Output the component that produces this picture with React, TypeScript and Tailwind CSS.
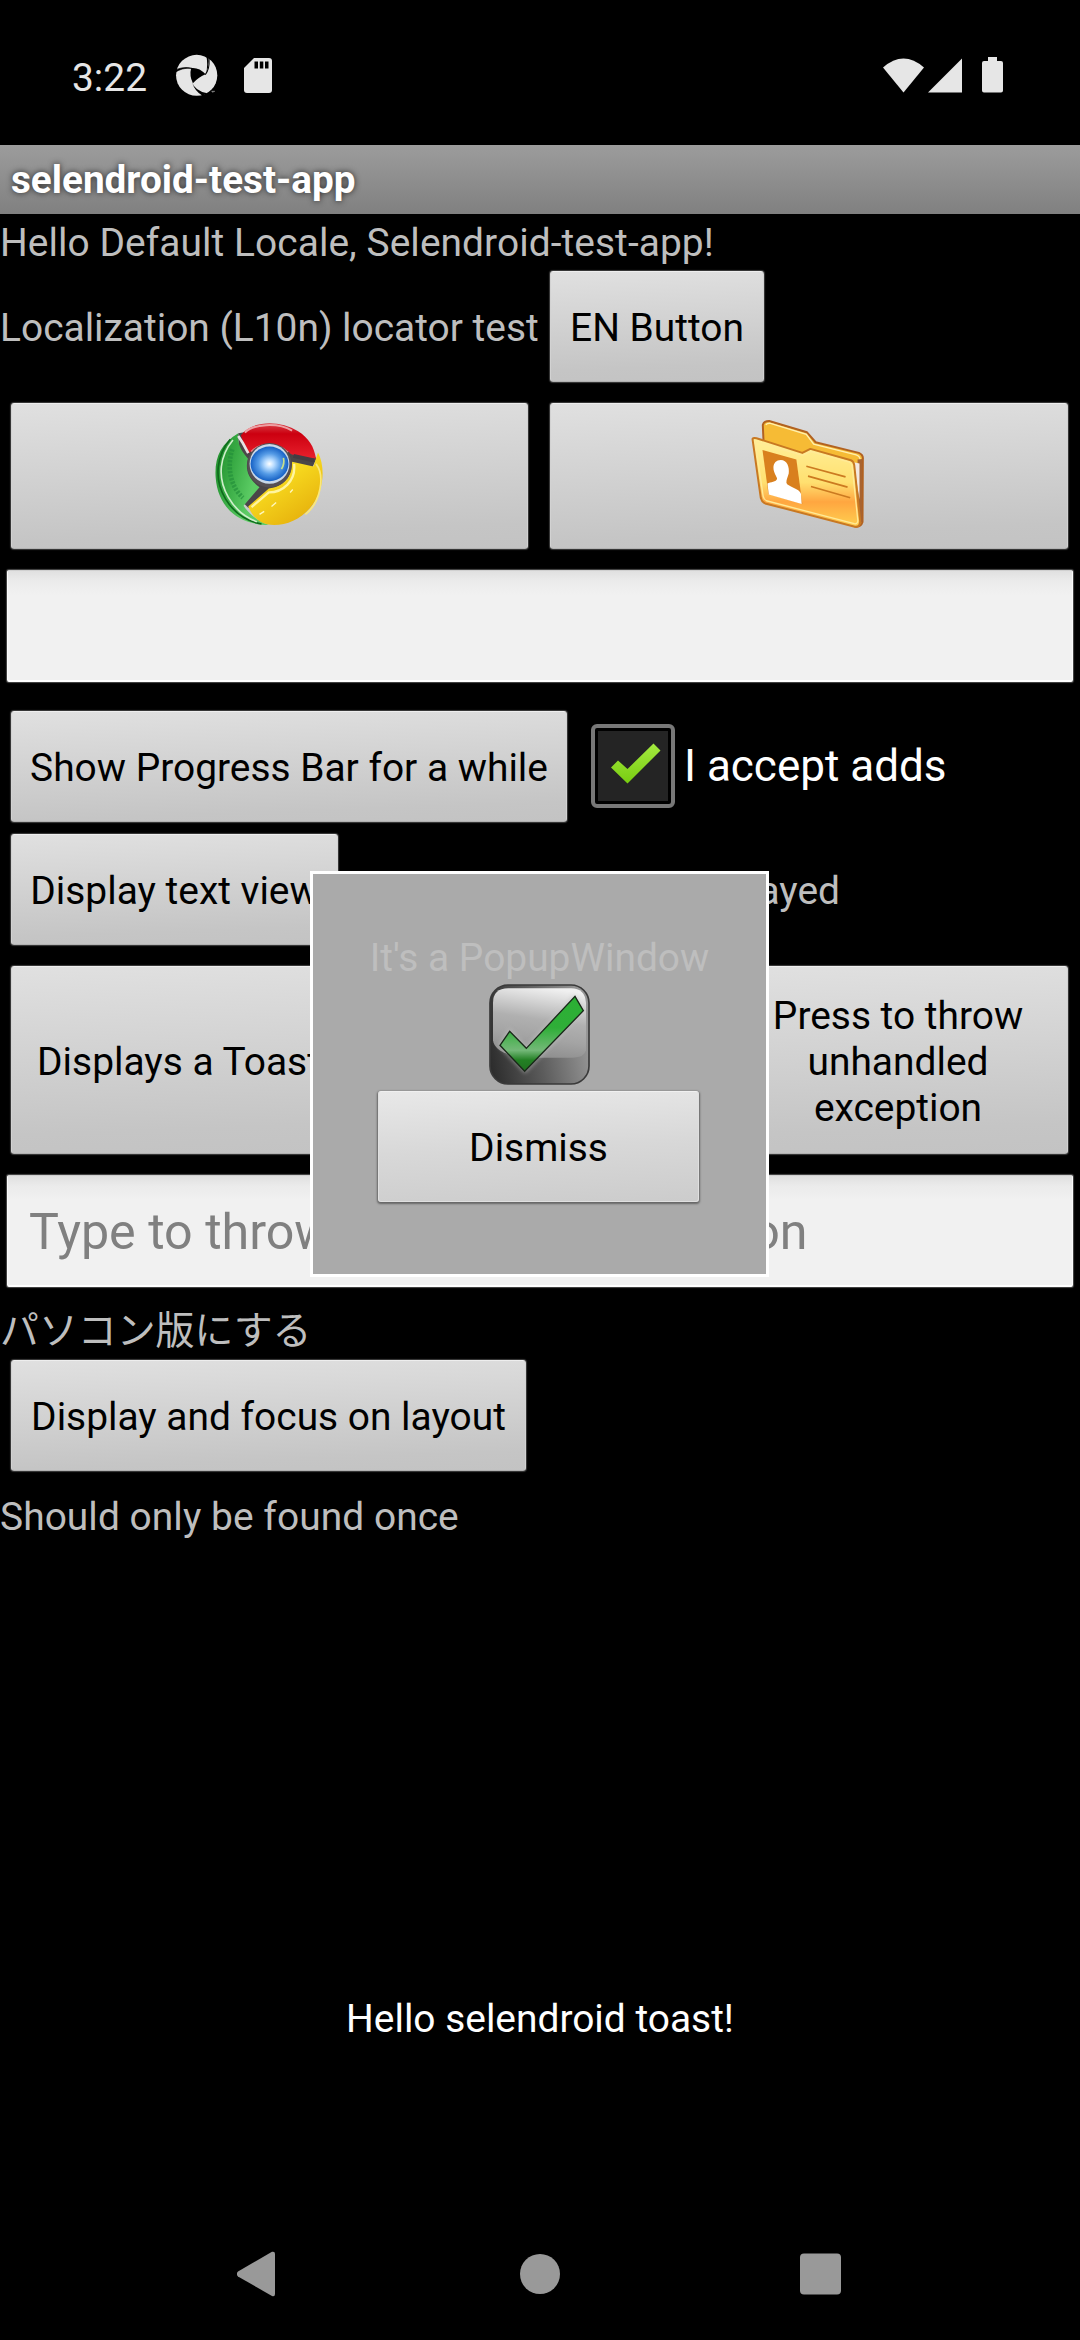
import React from "react";

const face =
  "rounded-[3px] border border-[#d2d2d2] border-t-[#eeeeee] border-b-[#b2b2b2] bg-[linear-gradient(178deg,#e0e0e0_0%,#d1d1d1_48%,#c5c5c5_85%,#c3c3c3_100%)] shadow-[0_0_1px_1px_#3c3c3c]";

function Button({ className = "", children }: { className?: string; children?: React.ReactNode }) {
  return (
    <button className={`flex items-center justify-center pt-[3px] text-center leading-[46px] text-black ${face} ${className}`}>
      {children}
    </button>
  );
}

function Field({ placeholder = "" }: { placeholder?: string }) {
  return (
    <input
      placeholder={placeholder}
      className="ml-[7px] block h-[112px] w-[1066px] rounded-[2px] border border-[#fafafa] border-t-[#d0d0d0] border-b-2 border-b-white bg-[#f1f1f1] bg-[linear-gradient(#e0e0e0,#ebebeb_10px,#f1f1f1_24px)] px-[21px] pt-[2px] text-[50.2px] text-black shadow-[0_0_1px_1px_#4a4a4a] outline-none placeholder:text-[#808080] placeholder:opacity-100"
    />
  );
}

function RotorIcon() {
  return (
    <svg className="h-[43px] w-[43px]" viewBox="508 72 125 129" preserveAspectRatio="none">
      <ellipse cx="571" cy="136" rx="60" ry="61.5" fill="#e6e6e6" />
      <path d="M555 114 Q578 111 597 133 Q578 140 560 160 Q549 137 555 114Z" fill="#000" />
      <path d="M507 128 Q528 112 557 115 Q532 108 507 121Z" fill="#000" stroke="#000" strokeWidth="2" />
      <path d="M603 70 Q611 105 597 134 Q605 110 599 76Z" fill="#000" />
      <path d="M558 158 Q566 182 602 190 L588 197 Q566 184 558 158Z" fill="#000" />
      <path d="M607 88 Q609 118 596 134" fill="none" stroke="#000" strokeWidth="3" />
      <path d="M614 184h10M618 184v4" stroke="#bbb" strokeWidth="2" />
    </svg>
  );
}

function SdIcon() {
  return (
    <svg className="h-[35px] w-[28px]" viewBox="0 0 28 35">
      <path d="M10 0H25a3 3 0 0 1 3 3V32a3 3 0 0 1-3 3H3a3 3 0 0 1-3-3V10Z" fill="#e6e6e6" />
      <path d="M10.500 3.500h3.500v7h-3.500zM15.800 3.500h3.500v7h-3.500zM21 3.500h3.500v7H21z" fill="#000" />
    </svg>
  );
}

function ChromeIcon() {
  return (
    <svg className="h-[108px] w-[113px]" viewBox="100 95 340 325">
      <defs>
        <linearGradient id="cr" x1="0" y1="0" x2="0" y2="1">
          <stop offset="0" stopColor="#d84048" />
          <stop offset=".3" stopColor="#cc0010" />
          <stop offset="1" stopColor="#e8202c" />
        </linearGradient>
        <linearGradient id="cg" x1="0" y1="0" x2="1" y2=".4">
          <stop offset="0" stopColor="#1c8a28" />
          <stop offset=".4" stopColor="#38aa44" />
          <stop offset=".8" stopColor="#5ccc64" />
        </linearGradient>
        <linearGradient id="cy" x1="0" y1="0" x2=".7" y2="1">
          <stop offset="0" stopColor="#fff070" />
          <stop offset=".4" stopColor="#f8dc20" />
          <stop offset="1" stopColor="#e6b00c" />
        </linearGradient>
        <radialGradient id="cb">
          <stop offset="0" stopColor="#fff" />
          <stop offset=".25" stopColor="#b8dcff" />
          <stop offset=".6" stopColor="#559be6" />
          <stop offset="1" stopColor="#1560c4" />
        </radialGradient>
      </defs>
      <path d="M176 132 L300 110 L412 208 L400 232 L330 320 L206 356 L180 330Z" fill="#4a4648" />
      <path d="M176 132 C122 164 104 208 108 265 C114 350 172 408 268 408 C230 394 208 374 192 350 L240 294 C206 270 196 240 205 208 C190 190 172 170 176 132Z" fill="url(#cg)" />
      <path d="M152 150 C112 196 100 268 138 330 C166 376 208 398 246 405" fill="none" stroke="#0e6a1c" strokeWidth="5" />
      <path d="M160 152 C122 198 110 262 146 324 C170 366 204 388 232 398" fill="none" stroke="#cfeecb" strokeWidth="5" />
      <path d="M158 180 C142 230 150 290 190 326" fill="none" stroke="#24903a" strokeWidth="14" strokeDasharray="7 4" opacity=".7" />
      <path d="M184 138 C215 94 300 90 356 126 C388 146 404 172 410 208 C376 206 354 202 334 194 C300 156 240 158 208 192 C198 170 190 160 184 138Z" fill="url(#cr)" />
      <path d="M196 130 C220 104 294 98 338 124" fill="none" stroke="#eda0a4" strokeWidth="6" />
      <path d="M216 188 C240 162 294 160 325 190" fill="none" stroke="#f0868c" strokeWidth="7" />
      <path d="M176 140 L190 162 L206 192" fill="none" stroke="#e6e2e4" strokeWidth="8" />
      <path d="M338 218 L402 232 L416 190 C438 234 434 296 402 344 C366 396 310 414 262 406 C236 398 218 382 206 352 L268 298 C312 294 338 262 338 218Z" fill="url(#cy)" />
      <path d="M344 224 C350 276 310 310 268 310 L216 354" fill="none" stroke="#fff5a0" strokeWidth="7" />
      <path d="M410 224 C438 260 424 340 378 376" fill="none" stroke="#fbe878" strokeWidth="5" />
      <path d="M276 352 l14 -12 M332 310 l8 -9 M240 376 l14 -9" stroke="#fff8c0" strokeWidth="4" />
      <path d="M342 200 L404 214" stroke="#443c42" strokeWidth="12" />
      <circle cx="270" cy="228" r="67" fill="#555054" />
      <circle cx="270" cy="224" r="60" fill="#c9d9ea" />
      <ellipse cx="270" cy="224" rx="57" ry="52" fill="url(#cb)" />
      <path d="M306 240 Q316 224 312 206" fill="none" stroke="#c9e08a" strokeWidth="5" />
    </svg>
  );
}

function ContactsIcon() {
  return (
    <svg className="h-[113px] w-[120px]" viewBox="90 85 360 340">
      <defs>
        <linearGradient id="fb" x1="0" y1="0" x2="0" y2="1">
          <stop offset="0" stopColor="#fff09a" />
          <stop offset=".5" stopColor="#ffe070" />
          <stop offset=".72" stopColor="#ffa640" />
          <stop offset="1" stopColor="#ffd050" />
        </linearGradient>
      </defs>
      <path d="M131 106 Q134 94 150 94 L264 128 L290 158 L420 190 Q434 196 432 210 L431 398 Q426 414 410 412 L140 310Z" fill="#f6bb35" stroke="#b26220" strokeWidth="6" strokeLinejoin="round" />
      <path d="M140 106 Q144 100 154 101 L262 134 L284 164 L412 196 Q424 200 424 212" fill="none" stroke="#fff0b0" strokeWidth="4" />
      <path d="M416 210 L430 208 L430 396 L420 408Z" fill="#a8632f" />
      <path d="M404 218 L422 222 L422 330Z" fill="#f3e8e0" />
      <path d="M100 148 Q102 144 112 146 L250 190 L274 178 L396 212 Q404 215 406 226 L424 396 Q424 414 408 412 L138 342 Q128 338 125 326Z" fill="url(#fb)" stroke="#c87822" strokeWidth="6" strokeLinejoin="round" />
      <path d="M108 156 L250 197 L276 186 L392 218 Q399 222 400 232 L417 394 Q416 405 406 403 L142 334 Q134 330 132 320Z" fill="none" stroke="#ffea98" strokeWidth="4" />
      <path d="M130 181 L232 210 L250 344 L148 314Z" fill="#d9801e" />
      <path d="M185 211 C204 211 212 232 209 252 C206 264 202 268 202 280 C204 292 242 296 246 314 L248 344 L149 315 L145 282 C154 278 172 278 174 268 C172 258 163 250 163 234 C163 220 172 211 185 211Z" fill="#fff" />
      <path d="M262 230 L380 262 M267 260 L386 293 M276 291 L394 325" stroke="#cc7a20" strokeWidth="5" />
    </svg>
  );
}

function PopupIcon() {
  return (
    <svg className="h-[101px] w-[101px]" viewBox="88 71 303 303">
      <defs>
        <linearGradient id="pb" x1=".6" y1="0" x2=".4" y2="1">
          <stop offset="0" stopColor="#f0f0f0" />
          <stop offset=".45" stopColor="#b0b0b0" />
          <stop offset=".7" stopColor="#a4a4a4" />
          <stop offset="1" stopColor="#8c8c8c" />
        </linearGradient>
        <linearGradient id="pd" x1="0" y1=".8" x2="1" y2=".6">
          <stop offset="0" stopColor="#2c2c2c" />
          <stop offset=".5" stopColor="#5c5c5c" />
          <stop offset="1" stopColor="#969696" />
        </linearGradient>
        <linearGradient id="pg" x1="0" y1="0" x2="0" y2="1">
          <stop offset="0" stopColor="#2bb034" />
          <stop offset=".42" stopColor="#2fae38" />
          <stop offset=".72" stopColor="#74b878" />
          <stop offset=".85" stopColor="#238024" />
          <stop offset="1" stopColor="#207020" />
        </linearGradient>
        <filter id="pf">
          <feGaussianBlur stdDeviation="7" />
        </filter>
      </defs>
      <rect x="91" y="74" width="297" height="297" rx="54" fill="url(#pd)" stroke="#3a3a3a" strokeWidth="5" />
      <path d="M100 128 Q100 84 146 84 H334 Q376 84 379 128 V270 Q374 292 340 292 H200 C140 286 104 270 100 240Z" fill="url(#pb)" />
      <path d="M124 256 L150 214 L200 266 L344 112 L368 151 L196 330Z" fill="none" stroke="#c4c4c4" strokeWidth="12" opacity=".6" filter="url(#pf)" />
      <path d="M121 255 L150 213 L200 264 L346 108 L371 151 L195 333Z" fill="url(#pg)" stroke="#182818" strokeWidth="4" />
    </svg>
  );
}

export default function App() {
  return (
    <div className="relative flex h-[2340px] w-[1080px] flex-col overflow-hidden bg-black font-[Roboto,'Noto_Sans_CJK_JP',sans-serif] text-[38.9px] leading-[46px] text-[#bebebe]">
      <header className="flex h-[145px] items-start justify-between pr-[77px] pl-[72px] text-[#e6e6e6]">
        <div className="flex">
          <span className="mt-[55px] w-[103px]">3:22</span>
          <div className="mt-[54px]">
            <RotorIcon />
          </div>
          <div className="mt-[58px] ml-[26px]">
            <SdIcon />
          </div>
        </div>
        <div className="mt-[57px] flex">
          <svg className="h-[36px] w-[120px]" viewBox="0 0 120 36" fill="#e6e6e6">
            <path d="M0 10.500Q20.500-7.500 41 10.500L20.500 35.500Z" />
            <path d="M45 35.500 79 1.500V35.500Z" />
            <path d="M105 0h9v4h4a2 2 0 0 1 2 2v27.500a2 2 0 0 1-2 2h-17a2 2 0 0 1-2-2V6a2 2 0 0 1 2-2h4z" />
          </svg>
        </div>
      </header>
      <div className="flex h-[69px] items-center bg-[linear-gradient(#9c9c9c,#808080)] pl-[11px] text-[38.7px] font-bold text-white [text-shadow:0_0_6px_#000000bb]">
        selendroid-test-app
      </div>

      <main className="flex flex-col">
        <p className="h-[57px] pt-[6px] tracking-[0.06px]">Hello Default Locale, Selendroid-test-app!</p>
        <div className="flex h-[111px] items-center">
          <span className="w-[550px] pt-[3px] whitespace-nowrap">Localization (L10n) locator test</span>
          <Button className="h-[111px] w-[214px]">EN Button</Button>
        </div>
        <div className="mt-[21px] flex gap-[22px] pl-[11px]">
          <Button className="h-[146px] w-[517px] pb-[6px]">
            <ChromeIcon />
          </Button>
          <Button className="h-[146px] w-[518px] pb-[6px]">
            <ContactsIcon />
          </Button>
        </div>
        <div className="mt-[21px]">
          <Field />
        </div>
        <div className="mt-[29px] flex h-[111px] items-center pl-[11px]">
          <Button className="h-[111px] w-[556px]">Show Progress Bar for a while</Button>
          <span className="mb-[2px] ml-[24px] flex h-[84px] w-[84px] items-center justify-center rounded-[6px] border-4 border-[#787878]">
            <svg className="h-[70px] w-[70px]" viewBox="0 0 70 70">
              <defs>
                <linearGradient id="ck" x1="0" y1="0" x2="0" y2="1">
                  <stop offset="0" stopColor="#a4ea40" />
                  <stop offset="1" stopColor="#78cc10" />
                </linearGradient>
              </defs>
              <rect width="70" height="70" fill="#242424" />
              <path d="M13 36.500 20 29.500 29.500 38 55.500 12.500 62.500 19.500 29.500 52.500Z" fill="url(#ck)" />
            </svg>
          </span>
          <span className="ml-[9px] pb-[2px] text-[44px] text-white">I accept adds</span>
        </div>
        <div className="mt-[12px] flex h-[111px] items-center pl-[11px]">
          <Button className="h-[111px] w-[327px]">Display text view</Button>
          <span className="w-[502px] pt-[3px] text-right whitespace-nowrap">Text is sometimes displayed</span>
        </div>
        <div className="mt-[21px] flex gap-[20px] pl-[11px]">
          <Button className="h-[188px] w-[335px]">Displays a Toast</Button>
          <Button className="h-[188px] w-[342px]">Display Popup Window</Button>
          <Button className="h-[188px] w-[340px] px-8">Press to throw unhandled exception</Button>
        </div>
        <div className="mt-[21px]">
          <Field placeholder="Type to throw unhandled exception" />
        </div>
        <p className="mt-[21px] h-[52px]">パソコン版にする</p>
        <Button className="ml-[11px] h-[111px] w-[515px]">Display and focus on layout</Button>
        <p className="mt-[23px] tracking-[0.06px]">Should only be found once</p>
      </main>

      <p className="mt-auto mb-[209px] text-center text-white">Hello selendroid toast!</p>
      <nav className="mb-[43px] flex h-[46px] items-center justify-center">
        <svg className="h-[46px] w-[606px]" viewBox="0 0 606 46" fill="#999999">
          <path d="M1 20.500 35 .8Q38 0 38 3V43Q38 46 35 45L1 25.500Q-1.500 23 1 20.500Z" />
          <circle cx="303" cy="23" r="20" />
          <rect x="563" y="2.500" width="41" height="41" rx="4" />
        </svg>
      </nav>

      <section className="absolute top-[871px] left-[310px] flex h-[406px] w-[459px] flex-col items-center border-[3px] border-white bg-[#aaaaaa] pt-[61px]">
        <p className="h-[49px] text-[#bebebe]">It's a PopupWindow</p>
        <PopupIcon />
        <button className="mt-[6px] mr-[2px] flex h-[111px] w-[321px] items-center justify-center rounded-[3px] border border-[#e0e0e0] border-t-[#f0f0f0] bg-[linear-gradient(177deg,#e8e8e8,#d8d8d8_50%,#cccccc)] pt-[3px] text-black shadow-[0_1px_2px_1px_#666666]">
          Dismiss
        </button>
      </section>
    </div>
  );
}
